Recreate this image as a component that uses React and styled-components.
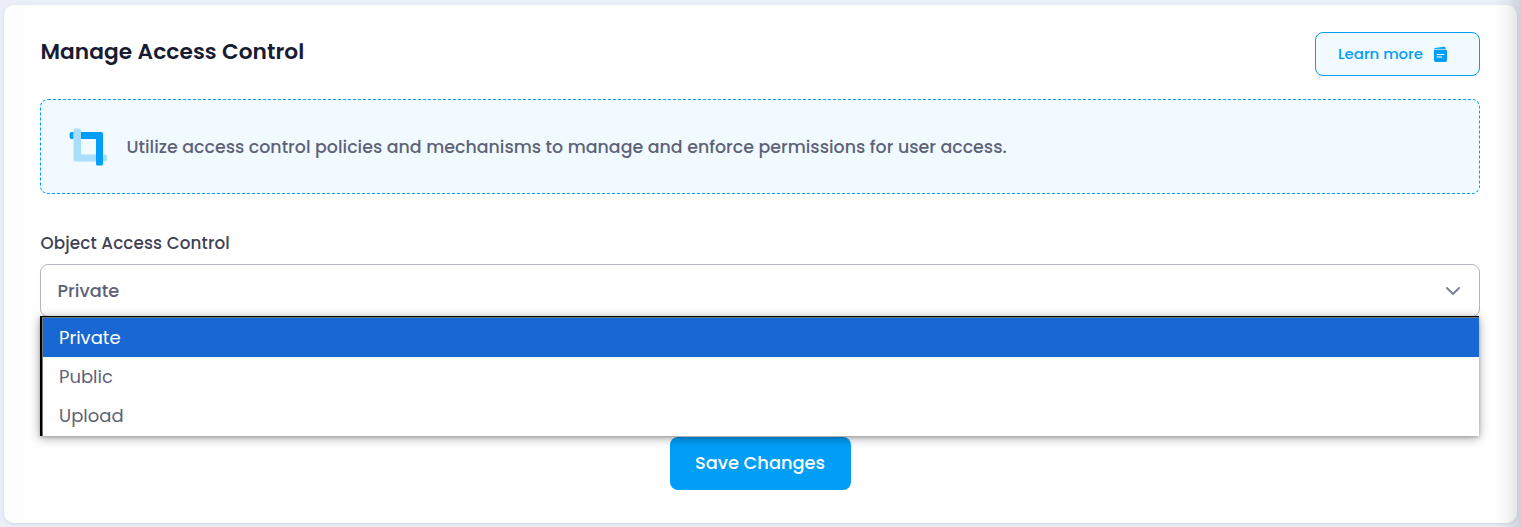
import React from "react";
import styled, { createGlobalStyle } from "styled-components";

const GlobalStyle = createGlobalStyle`
  * { box-sizing: border-box; }
  body {
    margin: 0;
    background: #e9eef7;
    font-family: Poppins, Inter, "Liberation Sans", sans-serif;
    overflow: hidden;
  }
`;

const Page = styled.main`
  position: relative;
  height: 527px;
  padding: 5px 4px 4px;
`;

const Card = styled.section`
  height: 518px;
  padding: 27px 37px 0 36px;
  border-radius: 10px;
  background: linear-gradient(90deg, #fcfcfd 0, #fefefe 24px, #fff 40px);
  box-shadow: 0 1px 3px rgba(70, 90, 140, 0.16);
`;

const EdgeShade = styled.div`
  position: absolute;
  top: 0;
  right: 0;
  bottom: 0;
  width: 26px;
  pointer-events: none;
  background: linear-gradient(90deg, rgba(0, 0, 0, 0), rgba(0, 0, 0, 0.03) 40%, rgba(0, 0, 0, 0.12));
`;

const Header = styled.header`
  display: flex;
  justify-content: space-between;
  align-items: flex-start;
  height: 67px;
`;

const Title = styled.h1`
  margin: 4px 0 0;
  padding-left: 0.5px;
  font-size: 21.7px;
  font-weight: 600;
  line-height: 32px;
  letter-spacing: 0.08px;
  color: #181c32;
`;

const LearnMore = styled.button`
  display: flex;
  align-items: center;
  gap: 10px;
  width: 165px;
  height: 44px;
  padding: 0 0 1px 22px;
  border: 1px solid #009ef7;
  border-radius: 8px;
  background: #f1faff;
  color: #009ef7;
  font: inherit;
  font-size: 14.9px;
  font-weight: 500;
  white-space: nowrap;

  svg {
    margin-top: 2px;
  }
`;

const Notice = styled.div`
  display: flex;
  align-items: center;
  gap: 18.5px;
  height: 95px;
  padding-left: 28px;
  border: 1px dashed #009ef7;
  border-radius: 8px;
  background: #f1faff;
`;

const NoticeText = styled.p`
  margin: 0;
  font-size: 17.4px;
  font-weight: 500;
  line-height: 26px;
  letter-spacing: 0.008px;
  color: #5e6278;
  white-space: nowrap;
`;

const Label = styled.label`
  display: block;
  margin-top: 36px;
  padding-left: 0.5px;
  font-size: 16.8px;
  font-weight: 500;
  line-height: 26px;
  letter-spacing: 0.12px;
  color: #3f4254;
`;

const Field = styled.div`
  position: relative;
  margin-top: 8px;
`;

const Select = styled.div`
  display: flex;
  align-items: center;
  justify-content: space-between;
  height: 53px;
  padding: 0 18px 0 16.5px;
  border: 1px solid #b5b5c3;
  border-radius: 8px;
  color: #5e6278;
  font-size: 17.7px;
  font-weight: 500;
`;

const Menu = styled.ul`
  position: absolute;
  top: 52px;
  left: 0;
  right: 1px;
  height: 120px;
  margin: 0;
  padding: 0;
  list-style: none;
  border-top: 1px solid #000;
  border-left: 2px solid #000;
  background: #fff;
  box-shadow: 0 2px 10px rgba(0, 0, 0, 0.36), 0 1px 3px rgba(0, 0, 0, 0.2);
`;

const MenuList = styled.div`
  border-top: 1px solid #767676;
  border-left: 1px solid #767676;
  height: 100%;
`;

const Option = styled.li`
  height: 39px;
  padding-left: 16px;
  font-size: 18px;
  line-height: 40px;
  color: ${(p) => (p.$selected ? "#fff" : "#5e6278")};
  background: ${(p) => (p.$selected ? "#1967d2" : "#fff")};
`;

const Actions = styled.footer`
  display: flex;
  justify-content: center;
  margin-top: 120px;
`;

const SaveButton = styled.button`
  width: 181px;
  height: 53px;
  padding: 0 0 3px;
  border: 0;
  border-radius: 8px;
  background: #009ef7;
  color: #fff;
  font: inherit;
  font-size: 17.8px;
  font-weight: 500;
`;

function BookIcon() {
  return (
    <svg width="15" height="17" viewBox="0 0 15 17">
      <path d="M1 3.4Q1 2.3 2.2 2.1L11 .8Q12.4 .6 12.6 2V3H1Z" fill="#009ef7" />
      <path d="M1 3.4H12.4Q14 3.4 14 5V14Q14 16 12 16H3Q1 16 1 14Z" fill="#009ef7" />
      <path d="M1.4 3.3H11.6" stroke="#b8e4ff" strokeWidth=".7" />
      <path d="M4.2 8.5H10.8" stroke="#fff" strokeWidth="1.2" strokeLinecap="round" />
      <path d="M4.2 11H8.6" stroke="#b8e4ff" strokeWidth="1.4" strokeLinecap="round" />
    </svg>
  );
}

function CropIcon() {
  return (
    <svg width="39" height="38" viewBox="0 0 39 38">
      <path d="M4.6 4H2.5Q.6 4 .6 6V9Q.6 11 2.5 11H4.6Z" fill="#009ef7" />
      <path d="M4.6 2.5Q4.6.6 6.5.6H10Q12 .6 12 2.5V26.4H36Q38 26.4 38 28.4V31.4Q38 33.4 36 33.4H6.6Q4.6 33.4 4.6 31.4Z" fill="#aadefc" />
      <path d="M12 4H32.5Q34 4 34 5.5V36Q34 37.5 32.5 37.5H28.5Q27 37.5 27 36V11H12Z" fill="#009ef7" />
    </svg>
  );
}

function Chevron() {
  return (
    <svg width="16" height="10" viewBox="0 0 16 10" fill="none">
      <path d="M2 2L8 8L14 2" stroke="#7e8299" strokeWidth="2" strokeLinecap="round" strokeLinejoin="round" />
    </svg>
  );
}

const options = ["Private", "Public", "Upload"];

export default function App() {
  return (
    <>
      <GlobalStyle />
      <Page>
        <Card>
          <Header>
            <Title>Manage Access Control</Title>
            <LearnMore>
              Learn more
              <BookIcon />
            </LearnMore>
          </Header>
          <Notice>
            <CropIcon />
            <NoticeText>
              Utilize access control policies and mechanisms to manage and enforce permissions for user access.
            </NoticeText>
          </Notice>
          <Label>Object Access Control</Label>
          <Field>
            <Select>
              Private
              <Chevron />
            </Select>
            <Menu>
              <MenuList>
                {options.map((name, i) => (
                  <Option key={name} $selected={i === 0}>
                    {name}
                  </Option>
                ))}
              </MenuList>
            </Menu>
          </Field>
          <Actions>
            <SaveButton>Save Changes</SaveButton>
          </Actions>
        </Card>
        <EdgeShade />
      </Page>
    </>
  );
}
